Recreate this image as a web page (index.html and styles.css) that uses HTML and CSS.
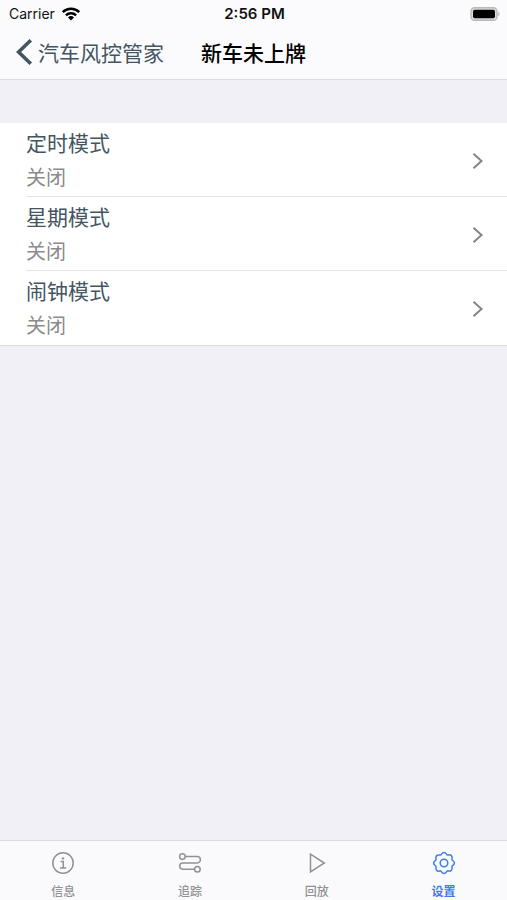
FILE: index.html
```html
<!DOCTYPE html>
<html lang="zh-CN">
<head>
<meta charset="utf-8">
<meta name="viewport" content="width=device-width, initial-scale=1">
<title>新车未上牌</title>
<link rel="stylesheet" href="styles.css">
</head>
<body>
<header class="top">
  <div class="status">
    <div class="carrier">Carrier
      <svg width="20" height="14" viewBox="0 0 20 14" fill="none" stroke="#000" stroke-width="2.4"><path d="M1.8 5.2a11.6 11.6 0 0 1 16.4 0M4.9 8.3a7.2 7.2 0 0 1 10.2 0"/><path d="M10 13.4 7 10.4a4.3 4.3 0 0 1 6 0z" fill="#000" stroke="none"/></svg>
    </div>
    <time class="clock">2:56 PM</time>
    <svg class="battery" width="30" height="14" viewBox="0 0 30 14"><rect x="1" y="0.7" width="26" height="12.6" rx="3.6" fill="#ddd" stroke="#b9b9ba" stroke-width="1.4"/><rect x="3" y="2.7" width="22" height="8.6" rx="1.8" fill="#000"/><path d="M28.4 4.8c1.5.7 1.5 3.7 0 4.4z" fill="#a5a5a6"/></svg>
  </div>
  <nav class="navbar">
    <a class="back" href="#"><svg width="18" height="28" viewBox="0 0 18 28" fill="none" stroke="#43555f" stroke-width="3.6"><path d="M14.8 2.2 2.6 14l12.2 11.8"/></svg>汽车风控管家</a>
    <h1 class="title">新车未上牌</h1>
  </nav>
</header>
<main class="content">
  <ul class="list">
    <li><a class="row" href="#"><span class="text"><span class="name">定时模式</span><span class="value">关闭</span></span><svg class="chevron" width="12" height="18" viewBox="0 0 12 18"><path d="M1.5 1.8 9.5 9l-8 7.2"/></svg></a></li>
    <li><a class="row" href="#"><span class="text"><span class="name">星期模式</span><span class="value">关闭</span></span><svg class="chevron" width="12" height="18" viewBox="0 0 12 18"><path d="M1.5 1.8 9.5 9l-8 7.2"/></svg></a></li>
    <li><a class="row" href="#"><span class="text"><span class="name">闹钟模式</span><span class="value">关闭</span></span><svg class="chevron" width="12" height="18" viewBox="0 0 12 18"><path d="M1.5 1.8 9.5 9l-8 7.2"/></svg></a></li>
  </ul>
</main>
<nav class="tabs">
  <a class="tab" href="#"><svg width="24" height="24" viewBox="-12 -12 24 24"><circle r="10.2"/><path d="M-2.4 -1.4H.3V4.8M-3 4.9H3.2"/><circle cx="0" cy="-4.6" r="1.2" fill="currentColor" stroke="none"/></svg>信息</a>
  <a class="tab" href="#"><svg width="24" height="24" viewBox="-12 -12 24 24"><circle cx="-7.6" cy="-6.4" r="2.8"/><circle cx="7.4" cy="6.2" r="2.8"/><path d="M-4.8 -6.4H7.2A3.2 3.2 0 0 1 7.2 0H-7.2A3.1 3.1 0 0 0 -7.2 6.2H4.6"/></svg>追踪</a>
  <a class="tab" href="#"><svg width="24" height="24" viewBox="-12 -12 24 24"><path d="M-6.5 -8.8 7.3 0-6.5 8.8z"/></svg>回放</a>
  <a class="tab active" href="#" aria-current="page"><svg width="24" height="24" viewBox="-12 -12 24 24"><circle r="3.8"/><path d="M-3.3 -8C-2.4 -8.3 -2.2 -10.4 0 -10.4S2.4 -8.3 3.3 -8S5.8 -8.9 7.35 -7.35S7.6 -4.2 8 -3.3S10.4 -2.2 10.4 0S8.3 2.4 8 3.3S8.9 5.8 7.35 7.35S4.2 7.6 3.3 8S2.2 10.4 0 10.4S-2.4 8.3 -3.3 8S-5.8 8.9 -7.35 7.35S-7.6 4.2 -8 3.3S-10.4 2.2 -10.4 0S-8.3 -2.4 -8 -3.3S-8.9 -5.8 -7.35 -7.35S-4.2 -7.6 -3.3 -8z"/></svg>设置</a>
</nav>
</body>
</html>
```
FILE: styles.css
```css
* {
  box-sizing: border-box;
}

body {
  display: flex;
  flex-direction: column;
  min-height: 100vh;
  margin: 0;
  background: #f0f0f6;
  font-family: Inter, "Noto Sans CJK SC", sans-serif;
}

a {
  color: inherit;
  text-decoration: none;
}

svg {
  display: block;
  flex: none;
}

.top {
  background: #fbfbfd;
  border-bottom: 1px solid #dcdce0;
}

.status {
  display: grid;
  grid-template-columns: 1fr auto 1fr;
  align-items: center;
  height: 27px;
  padding: 0 7px 0 9px;
  font-size: 14px;
  color: #111;
}

.carrier {
  display: flex;
  align-items: center;
  gap: 6px;
}

.clock {
  font-size: 15px;
  font-weight: 600;
}

.battery {
  justify-self: end;
}

.navbar {
  display: grid;
  grid-template-columns: 1fr auto 1fr;
  align-items: center;
  height: 52px;
  padding: 0 16px 3px;
  font-size: 21px;
}

.back {
  display: flex;
  align-items: center;
  gap: 4px;
  color: #43555f;
  white-space: nowrap;
}

.title {
  margin: 0;
  font-size: 21px;
  font-weight: 500;
  color: #000;
}

.content {
  flex: 1;
  padding-top: 43px;
}

.list {
  margin: 0;
  padding: 0 0 1px 26px;
  list-style: none;
  background: #fff;
  border-bottom: 1px solid #dcdce0;
}

.list li + li {
  border-top: 1px solid #e4e4e6;
}

.row {
  display: flex;
  align-items: center;
  justify-content: space-between;
  padding: 3px 23px 0 0;
}

.text {
  display: flex;
  flex-direction: column;
  font-size: 21px;
  line-height: 35px;
}

.name {
  color: #43555f;
}

.value {
  font-size: 20px;
  color: #8b8b8b;
}

.chevron {
  fill: none;
  stroke: #858585;
  stroke-width: 2;
}

.tabs {
  display: grid;
  grid-template-columns: repeat(4, 1fr);
  height: 60px;
  background: #fafafc;
  border-top: 1px solid #dcdce0;
}

.tab {
  display: flex;
  flex-direction: column;
  align-items: center;
  gap: 8px;
  padding-top: 10px;
  font-size: 12px;
  font-weight: 500;
  line-height: 18px;
  color: #929292;
}

.tab svg {
  fill: none;
  stroke: currentColor;
  stroke-width: 1.5;
}

.tab.active {
  color: #3b7fe8;
  font-weight: 700;
}
```
